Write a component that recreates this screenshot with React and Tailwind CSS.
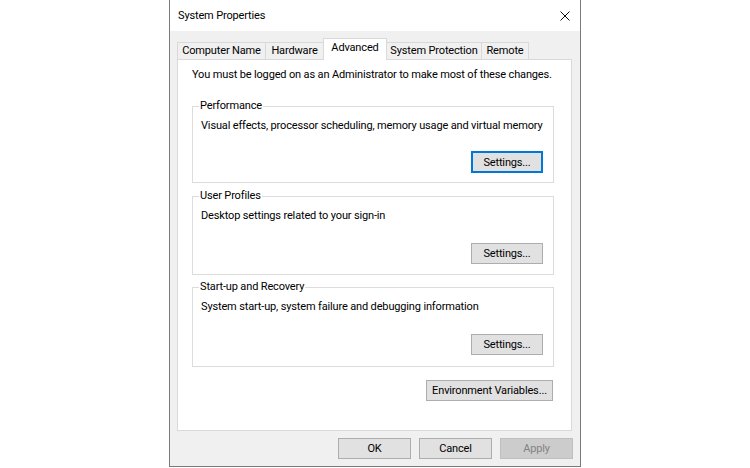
import React from 'react';

const font = { fontFamily: 'Roboto, "Liberation Sans", sans-serif' };

const tabs = [
  { label: 'Computer Name', w: 'w-[89px]' },
  { label: 'Hardware', w: 'w-[59px]' },
  { label: 'Advanced', w: 'w-[64px]', active: true },
  { label: 'System Protection', w: 'w-[96px]' },
  { label: 'Remote', w: 'w-[48px]' },
];

const groups = [
  { title: 'Performance', text: 'Visual effects, processor scheduling, memory usage and virtual memory', focused: true, h: 'h-[77px]', mt: '' },
  { title: 'User Profiles', text: 'Desktop settings related to your sign-in', h: 'h-[79px]', mt: 'mt-[13px]' },
  { title: 'Start-up and Recovery', text: 'System start-up, system failure and debugging information', h: 'h-[80px]', mt: 'mt-[12px]' },
];

const txt = 'whitespace-nowrap text-[11px] tracking-[-0.15px] leading-[16px] text-black';

function Button({ children, className = '', focused, disabled }) {
  const look = disabled
    ? 'bg-[#cccccc] border border-[#bfbfbf] text-[#838383]'
    : focused
      ? 'bg-[#e1e1e1] border-2 border-[#0078d7] text-black'
      : 'bg-[#e1e1e1] border border-[#adadad] text-black';
  return (
    <div className={`flex items-center justify-center whitespace-nowrap text-[11px] tracking-[-0.15px] leading-none ${look} ${className}`}>
      {children}
    </div>
  );
}

function Group({ title, text, focused, h, mt }) {
  return (
    <div className={`relative ${h} ${mt} border border-[#dcdcdc] pl-[8px] pr-[10px] pt-[11px] flex flex-col`}>
      <span className={`absolute left-[6px] -top-[9px] bg-white px-[1px] ${txt}`}>{title}</span>
      <div className={txt}>{text}</div>
      <div className={`flex justify-end ${focused ? 'mt-[17px]' : 'mt-[19px]'}`}>
        <Button className={`w-[72px] ${focused ? 'h-[22px]' : 'h-[21px]'}`} focused={focused}>Settings...</Button>
      </div>
    </div>
  );
}

export default function App() {
  return (
    <div className="w-[750px] h-[468px] bg-white flex" style={font}>
      <div className="ml-[169px] w-[412px] h-[467px] bg-[#f0f0f0] border-l border-r border-b border-[#7a7a7a] flex flex-col">
        <div className="h-[31px] bg-white flex items-center justify-between pl-[8px] pr-[9px] pt-[1px]">
          <span className={`${txt} text-[11.5px]`}>System Properties</span>
          <svg width="10" height="10" viewBox="0 0 10 10" className="mr-[1px]">
            <path d="M0.5 0.5 L9.5 9.5 M9.5 0.5 L0.5 9.5" stroke="#111" strokeWidth="1" fill="none" />
          </svg>
        </div>

        <div className="flex items-end pt-[7px] pl-[7px] h-[28px]">
          {tabs.map((t, i) => (
            <div
              key={t.label}
              className={`${t.w} ${i > 0 ? '-ml-[1px]' : ''} border-t border-l border-r border-[#d9d9d9] flex justify-center ${txt} ${
                t.active ? 'relative z-10 h-[22px] -mb-[1px] bg-white items-start pt-[1px]' : 'h-[17px] bg-[#f0f0f0] items-center'
              }`}
            >
              {t.label}
            </div>
          ))}
        </div>

        <div className="ml-[7px] w-[395px] h-[372px] bg-white border border-[#d9d9d9] pl-[14px] pr-[17px] pt-[7px] flex flex-col">
          <div className={txt}>You must be logged on as an Administrator to make most of these changes.</div>
          <div className="mt-[23px] flex flex-col">
            {groups.map((g) => (
              <Group key={g.title} {...g} />
            ))}
          </div>
          <div className="flex justify-end mt-[13px]">
            <Button className="w-[127px] h-[21px] mr-[1px]">Environment Variables...</Button>
          </div>
        </div>

        <div className="flex justify-end gap-[8px] pr-[7px] mt-[7px]">
          <Button className="w-[73px] h-[21px]">OK</Button>
          <Button className="w-[73px] h-[21px]">Cancel</Button>
          <Button className="w-[73px] h-[21px]" disabled>Apply</Button>
        </div>
      </div>
    </div>
  );
}
